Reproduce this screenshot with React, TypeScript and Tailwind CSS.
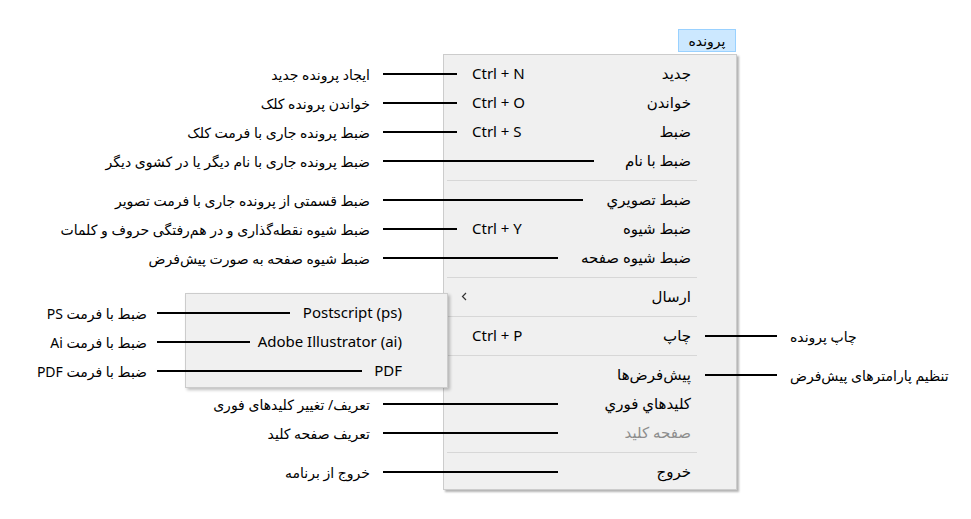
import type { ReactNode } from 'react'

type Item =
  | { sep: true }
  | {
      sep?: false
      label: string
      shortcut?: string
      muted?: boolean
      send?: boolean
      note?: string
      line?: string
      right?: string
    }

const items: Item[] = [
  { label: 'جدید', shortcut: 'Ctrl + N', note: 'ایجاد پرونده جدید', line: 'w-[74px]' },
  { label: 'خواندن', shortcut: 'Ctrl + O', note: 'خواندن پرونده کلک', line: 'w-[74px]' },
  { label: 'ضبط', shortcut: 'Ctrl + S', note: 'ضبط پرونده جاری با فرمت کلک', line: 'w-[74px]' },
  { label: 'ضبط با نام', note: 'ضبط پرونده جاری با نام دیگر یا در کشوی دیگر', line: 'w-[211px]' },
  { sep: true },
  { label: 'ضبط تصويري', note: 'ضبط قسمتی از پرونده جاری با فرمت تصویر', line: 'w-[200px]' },
  { label: 'ضبط شیوه', shortcut: 'Ctrl + Y', note: 'ضبط شیوه نقطه‌گذاری و در هم‌رفتگی حروف و کلمات', line: 'w-[74px]' },
  { label: 'ضبط شیوه صفحه', note: 'ضبط شیوه صفحه به صورت پیش‌فرض', line: 'w-[175px]' },
  { sep: true },
  { label: 'ارسال', send: true },
  { sep: true },
  { label: 'چاپ', shortcut: 'Ctrl + P', right: 'چاپ پرونده' },
  { sep: true },
  { label: 'پیش‌فرض‌ها', right: 'تنظیم پارامترهای پیش‌فرض' },
  { label: 'کلیدهاي فوري', note: 'تعریف/ تغییر کلیدهای فوری', line: 'w-[175px]' },
  { label: 'صفحه کلید', muted: true, note: 'تعریف صفحه کلید', line: 'w-[175px]' },
  { sep: true },
  { label: 'خروج', note: 'خروج از برنامه', line: 'w-[175px]' },
]

const formats = [
  { label: 'Postscript (ps)', note: 'ضبط با فرمت PS', line: 'w-[133px]' },
  { label: 'Adobe Illustrator (ai)', note: 'ضبط با فرمت Ai', line: 'w-[93px]' },
  { label: 'PDF', note: 'ضبط با فرمت PDF', line: 'w-[205px]' },
]

function LeftNote({ text, line, gap }: { text: string; line: string; gap: 'menu' | 'sub' }) {
  return (
    <>
      <span
        dir="rtl"
        className={`absolute right-full top-1/2 -translate-y-1/2 whitespace-nowrap text-[14px] text-black ${
          gap === 'menu' ? 'mr-[74px]' : 'mr-[39px]'
        }`}
      >
        {text}
      </span>
      <span
        className={`absolute top-1/2 -translate-y-1/2 h-[2px] bg-black ${line} ${
          gap === 'menu' ? 'left-[-61px]' : 'left-[-29px]'
        }`}
      />
    </>
  )
}

function SendMenu() {
  return (
    <div className="absolute left-[-259px] top-[11px] z-10 w-[263px] border border-[#cccccc] bg-[#f0f0f0] pt-[4px] pb-[2px] shadow-[2px_2px_3px_rgba(0,0,0,0.25)]">
      {formats.map((f) => (
        <div key={f.label} className="relative flex h-[29px] items-center justify-end pr-[45px] text-[15px] text-black">
          <LeftNote text={f.note} line={f.line} gap="sub" />
          <span>{f.label}</span>
        </div>
      ))}
    </div>
  )
}

function Row({ children }: { children: ReactNode }) {
  return <div className="relative flex h-[29px] items-center pl-[28px] pr-[45px] text-[15px] text-black">{children}</div>
}

export default function App() {
  return (
    <div className="h-[519px] w-[971px] overflow-hidden bg-white pt-[29px] font-['Noto_Sans','DejaVu_Sans',sans-serif]">
      <div className="ml-[443px] w-[294px]">
        <div className="mb-[2px] flex justify-end pr-px">
          <div className="flex h-[23px] w-[58px] items-center justify-center border border-[#99d1ff] bg-[#cce8ff] text-[14px] text-black">
            پرونده
          </div>
        </div>

        <div className="relative border border-[#cccccc] bg-[#f0f0f0] pt-[4px] pb-[3px] shadow-[2px_2px_2px_rgba(0,0,0,0.3)]">
          {items.map((it, i) => {
            if (it.sep) {
              return (
                <div key={i} className="flex h-[10px] items-center pl-[3px] pr-[39px]">
                  <div className="h-px w-full bg-[#d7d7d7]" />
                </div>
              )
            }
            return (
              <Row key={i}>
                {it.note && it.line && <LeftNote text={it.note} line={it.line} gap="menu" />}
                {it.right && (
                  <>
                    <span className="absolute left-[261px] top-1/2 h-[2px] w-[72px] -translate-y-1/2 bg-black" />
                    <span dir="rtl" className="absolute left-[346px] top-1/2 -translate-y-1/2 whitespace-nowrap text-[14px] text-black">
                      {it.right}
                    </span>
                  </>
                )}
                {it.send && (
                  <>
                    <svg className="-ml-[11px] h-[9px] w-[6px] text-[#333]" viewBox="0 0 6 9" fill="none" stroke="currentColor" strokeWidth="1.2">
                      <path d="M5 1L1.5 4.5L5 8" />
                    </svg>
                    <SendMenu />
                  </>
                )}
                {it.shortcut && <span>{it.shortcut}</span>}
                <span dir="rtl" className={`ml-auto ${it.muted ? 'text-[#8d8d8d]' : ''}`}>
                  {it.label}
                </span>
              </Row>
            )
          })}
        </div>
      </div>
    </div>
  )
}
